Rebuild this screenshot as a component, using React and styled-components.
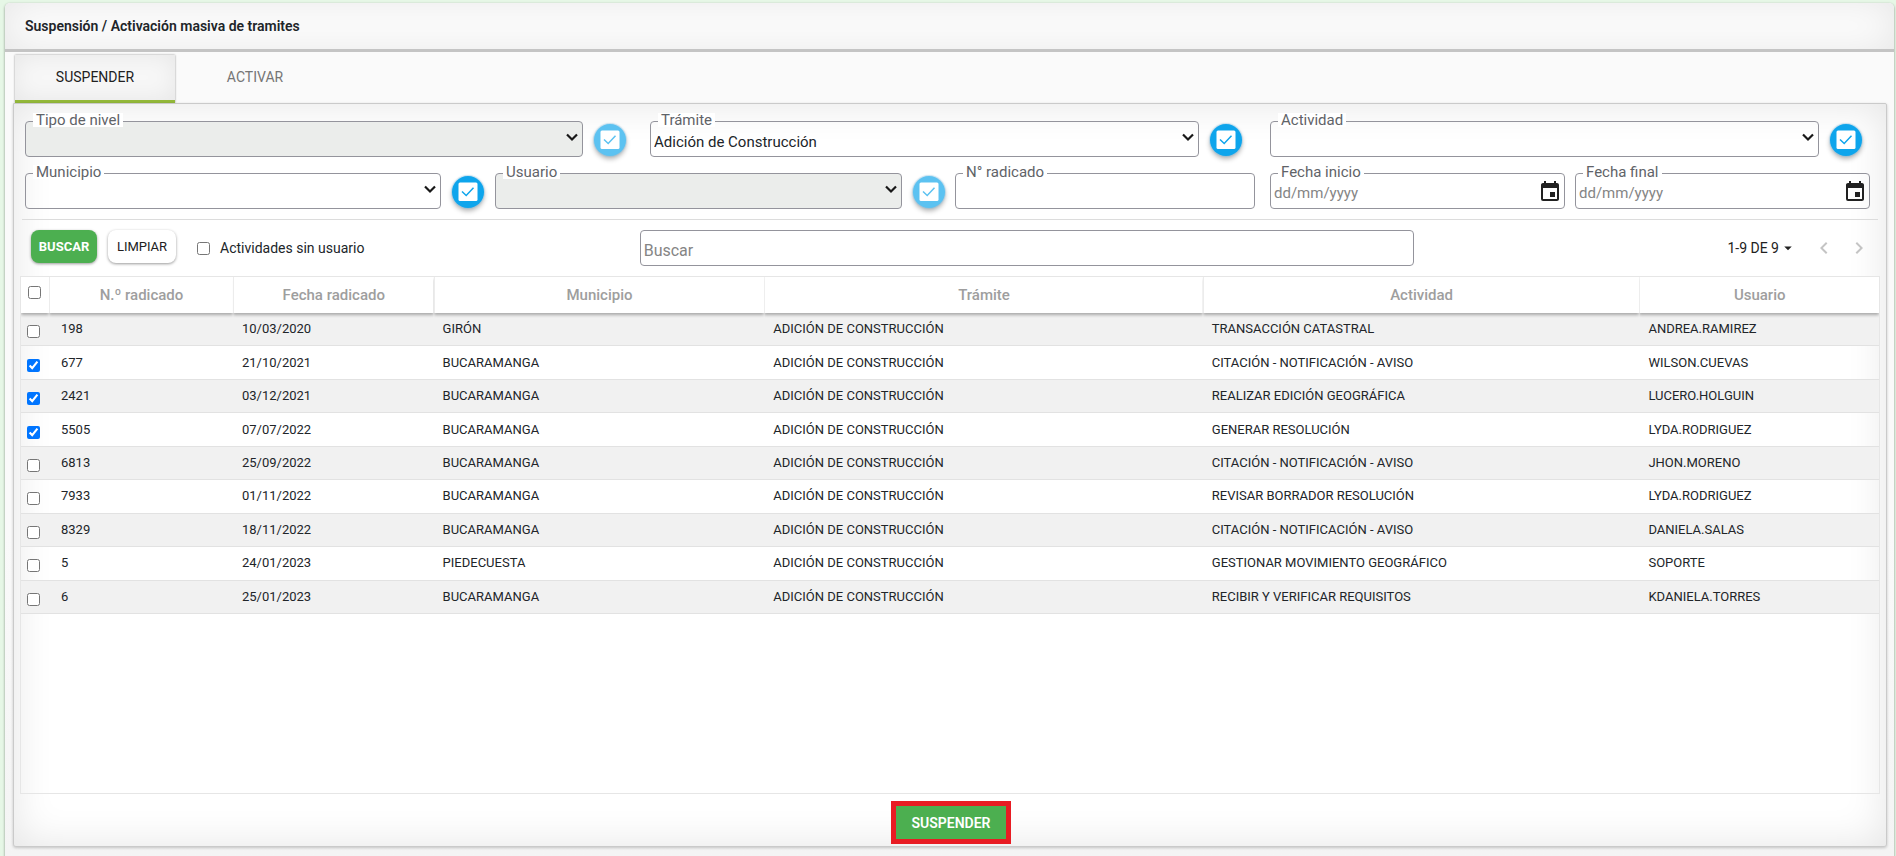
import React, { useState } from "react";
import styled, { createGlobalStyle, css } from "styled-components";
import { MdEvent, MdChevronLeft, MdChevronRight, MdArrowDropDown } from "react-icons/md";

const GlobalStyle = createGlobalStyle`
  *, *::before, *::after { box-sizing: border-box; }
  body {
    margin: 0;
    background: #e6f7e6;
    color: #212529;
    font-family: Roboto, "Liberation Sans", sans-serif;
    font-size: 14px;
  }
  button, input, select { font-family: inherit; }
`;

const Page = styled.div`
  display: flex;
  flex-direction: column;
  min-height: 100vh;
  padding: 3px 2px 0 5px;
`;

const Card = styled.main`
  display: flex;
  flex: 1;
  flex-direction: column;
  background: #fafafa;
  border-radius: 5px 5px 0 0;
  box-shadow: 0 1px 2px 1px rgba(0, 0, 0, 0.2);
  overflow: hidden;
`;

const CardHeader = styled.header`
  height: 49px;
  padding: 0 20px;
  background: #fff;
  border-bottom: 3px solid #c4c4c4;
  box-shadow: inset 0 0 40px rgba(0, 0, 0, 0.1);
`;

const Title = styled.h1`
  margin: 0;
  font-size: 14px;
  font-weight: 600;
  line-height: 46px;
`;

const CardBody = styled.div`
  display: flex;
  flex: 1;
  flex-direction: column;
  padding: 3px 7px 9px 8px;
  background: linear-gradient(#fafafa 60%, #f4f4f4);
`;

const Tabs = styled.div`
  display: flex;
  padding-left: 2px;
`;

const Tab = styled.button`
  width: 160px;
  height: 48px;
  padding: 0 0 2px;
  border: 0;
  border-bottom: 3px solid transparent;
  background: transparent;
  color: #757575;
  font-size: 14px;
  ${(p) =>
    p.$active &&
    css`
      border-bottom-color: #93b83a;
      background: #f7f7f7;
      color: #212121;
      box-shadow: inset 0 0 24px rgba(0, 0, 0, 0.07), 0 0 2px rgba(0, 0, 0, 0.4);
    `}
`;

const Panel = styled.section`
  display: flex;
  flex: 1;
  flex-direction: column;
  padding: 0 8px;
  border: 1px solid #cacaca;
  border-radius: 0 2px 3px 3px;
  background: #fff;
  box-shadow: inset 0 0 40px rgba(0, 0, 0, 0.11), 0 1px 3px rgba(0, 0, 0, 0.2);
`;

const Filters = styled.div`
  display: grid;
  gap: 16px;
  padding: 17px 8px 10px 3px;
  border-bottom: 1px solid #dcdcdc;
`;

const FilterRow = styled.div`
  display: grid;
  grid-template-columns: ${(p) => p.$columns};
`;

const FilterCell = styled.div`
  display: flex;
  gap: 11px;
  min-width: 0;
  padding-right: ${(p) => p.$end || 0}px;
`;

const Field = styled.div`
  position: relative;
  display: flex;
  flex: 1;
  min-width: 0;
`;

const FieldLabel = styled.label`
  position: absolute;
  top: -8px;
  left: 8px;
  padding: 0 3px;
  background: #fff;
  color: #5f6368;
  font-size: 15px;
  line-height: 14px;
`;

const controlStyle = css`
  width: 100%;
  height: 36px;
  margin: 0;
  border: 1px solid #94949c;
  border-radius: 4px;
  background: transparent;
  color: #212529;
  font-size: 16px;
  outline: 0;
  &::placeholder { color: #858585; opacity: 1; }
`;

const Select = styled.select`
  ${controlStyle}
  appearance: none;
  padding: 5px 28px 0 3px;
  font-size: 15px;
  opacity: 1;
  &:disabled { background: #ebedeb; }
`;

const TextInput = styled.input`
  ${controlStyle}
  padding: 4px 3px 0;
  font-size: ${(p) => (p.$compact ? 15 : 16)}px;
`;

const SelectArrow = styled.svg`
  position: absolute;
  top: 12px;
  right: 5px;
  width: 12px;
  height: 9px;
  pointer-events: none;
`;

const DateButton = styled.button`
  position: absolute;
  top: 7px;
  right: 3px;
  display: flex;
  padding: 0;
  border: 0;
  background: none;
  color: #212121;
  font-size: 24px;
`;

const RoundButton = styled.button`
  display: flex;
  flex: none;
  align-items: center;
  justify-content: center;
  align-self: flex-end;
  width: 32px;
  height: 32px;
  margin-bottom: 1px;
  padding: 0;
  border: 0;
  border-radius: 50%;
  background: #0ea5ec;
  color: #0ea5ec;
  box-shadow: 0 0 1px 1px rgba(120, 190, 230, 0.4), 0 3px 5px rgba(0, 0, 0, 0.3);
  &:disabled {
    background: #5cc2f1;
    color: #5cc2f1;
  }
`;

const Toolbar = styled.div`
  display: grid;
  grid-template-columns: 618fr 775fr 464fr;
  padding: 10px 0;
`;

const ToolbarActions = styled.div`
  display: flex;
  align-items: flex-start;
  padding-left: 9px;
`;

const Button = styled.button`
  width: ${(p) => p.$width}px;
  height: 33px;
  margin-right: ${(p) => p.$after || 0}px;
  padding: 0;
  border: 0;
  border-radius: 8px;
  background: #fff;
  color: #212121;
  font-size: 13px;
  box-shadow: 0 1px 3px rgba(0, 0, 0, 0.4);
  ${(p) =>
    p.$primary &&
    css`
      background: #4caf50;
      color: #fff;
      font-weight: 700;
    `}
`;

const CheckLabel = styled.label`
  display: flex;
  align-items: center;
  gap: 10px;
  height: 36px;
  font-size: 14px;
`;

const Checkbox = styled.input`
  display: block;
  width: 13px;
  height: 13px;
  margin: 0;
`;

const Pager = styled.div`
  display: flex;
  align-items: center;
  justify-content: flex-end;
  height: 36px;
  padding-right: 7px;
`;

const PagerButton = styled.button`
  display: flex;
  align-items: center;
  justify-content: center;
  height: 24px;
  padding: 0;
  border: 0;
  background: none;
  color: #212121;
  font-size: 14px;
  svg { width: 18px; height: 18px; }
`;

const PageArrow = styled(PagerButton)`
  width: 24px;
  margin-left: ${(p) => p.$before}px;
  color: #c4c4c4;
  svg { width: 24px; height: 24px; }
`;

const TableArea = styled.div`
  flex: 1;
  margin: 0 -2px;
  border: 1px solid #e6e6e6;
`;

const Table = styled.table`
  width: 100%;
  height: 337px;
  border-collapse: separate;
  border-spacing: 0;
  table-layout: fixed;
`;

const Head = styled.th`
  height: 36px;
  padding: 0 0 1px;
  border-left: ${(p) => (p.$first ? "0" : "1px solid #ececec")};
  background: #fff;
  color: #9e9e9e;
  font-size: 15px;
  font-weight: 500;
  text-align: center;
  box-shadow: 0 2px 3px rgba(0, 0, 0, 0.3);
  clip-path: inset(0 0 -6px 0);
`;

const Row = styled.tr`
  background: ${(p) => (p.$shaded ? "#f1f1f1" : "transparent")};
`;

const Cell = styled.td`
  padding: 0 9px 0 ${(p) => (p.$wide ? 12 : 9)}px;
  border-bottom: 1px solid #e2e2e2;
  font-size: 13px;
  line-height: 16px;
  white-space: nowrap;
`;

const CheckCell = styled(Cell)`
  padding: 5px 0 0 6px;
`;

const HeadCheck = styled.div`
  padding: 0 0 4px 7px;
`;

const Footer = styled.footer`
  display: flex;
  justify-content: center;
  padding: 7px 0 2px 2px;
`;

const SubmitButton = styled.button`
  width: 120px;
  height: 43px;
  padding: 0;
  border: 5px solid #e81c23;
  background: #4caf50;
  color: #fff;
  font-size: 14px;
  font-weight: 600;
`;

function SelectField({ id, label, value, disabled }) {
  return (
    <>
      <Field>
        <Select id={id} disabled={disabled} defaultValue={value || ""}>
          <option value={value || ""}>{value || ""}</option>
        </Select>
        <FieldLabel htmlFor={id}>{label}</FieldLabel>
        <SelectArrow viewBox="0 0 12 9" aria-hidden="true">
          <path d="M1 1.5 6 6.5 11 1.5" fill="none" stroke="#181818" strokeWidth="2.2" />
        </SelectArrow>
      </Field>
      <RoundButton type="button" disabled={disabled} aria-label={`Seleccionar ${label}`}>
        <svg width="20" height="20" viewBox="0 0 20 20" aria-hidden="true">
          <rect x="0.5" y="0.5" width="19" height="18.5" rx="1.5" fill="#fff" />
          <path d="M4 9.5 8.2 13.5 15.5 5.8" fill="none" stroke="currentColor" strokeWidth="1.5" />
        </svg>
      </RoundButton>
    </>
  );
}

function InputField({ id, label, placeholder, date }) {
  return (
    <Field>
      <TextInput id={id} type="text" placeholder={placeholder} $compact />
      <FieldLabel htmlFor={id}>{label}</FieldLabel>
      {date && (
        <DateButton type="button" aria-label={`Abrir calendario de ${label}`}>
          <MdEvent />
        </DateButton>
      )}
    </Field>
  );
}

const COLUMNS = ["N.º radicado", "Fecha radicado", "Municipio", "Trámite", "Actividad", "Usuario"];
const COLUMN_WIDTHS = ["9.9%", "10.8%", "17.8%", "23.6%", "23.5%", "auto"];
const TRAMITE = "ADICIÓN DE CONSTRUCCIÓN";

const ROWS = [
  ["198", "10/03/2020", "GIRÓN", TRAMITE, "TRANSACCIÓN CATASTRAL", "ANDREA.RAMIREZ"],
  ["677", "21/10/2021", "BUCARAMANGA", TRAMITE, "CITACIÓN - NOTIFICACIÓN - AVISO", "WILSON.CUEVAS"],
  ["2421", "03/12/2021", "BUCARAMANGA", TRAMITE, "REALIZAR EDICIÓN GEOGRÁFICA", "LUCERO.HOLGUIN"],
  ["5505", "07/07/2022", "BUCARAMANGA", TRAMITE, "GENERAR RESOLUCIÓN", "LYDA.RODRIGUEZ"],
  ["6813", "25/09/2022", "BUCARAMANGA", TRAMITE, "CITACIÓN - NOTIFICACIÓN - AVISO", "JHON.MORENO"],
  ["7933", "01/11/2022", "BUCARAMANGA", TRAMITE, "REVISAR BORRADOR RESOLUCIÓN", "LYDA.RODRIGUEZ"],
  ["8329", "18/11/2022", "BUCARAMANGA", TRAMITE, "CITACIÓN - NOTIFICACIÓN - AVISO", "DANIELA.SALAS"],
  ["5", "24/01/2023", "PIEDECUESTA", TRAMITE, "GESTIONAR MOVIMIENTO GEOGRÁFICO", "SOPORTE"],
  ["6", "25/01/2023", "BUCARAMANGA", TRAMITE, "RECIBIR Y VERIFICAR REQUISITOS", "KDANIELA.TORRES"],
];

export default function App() {
  const [selected, setSelected] = useState(["677", "2421", "5505"]);
  const [tab, setTab] = useState("SUSPENDER");
  const toggle = (id) =>
    setSelected((ids) => (ids.includes(id) ? ids.filter((x) => x !== id) : [...ids, id]));
  const allSelected = selected.length === ROWS.length;

  return (
    <>
      <GlobalStyle />
      <Page>
        <Card>
          <CardHeader>
            <Title>Suspensión / Activación masiva de tramites</Title>
          </CardHeader>
          <CardBody>
            <Tabs role="tablist">
              {["SUSPENDER", "ACTIVAR"].map((name) => (
                <Tab
                  key={name}
                  type="button"
                  role="tab"
                  aria-selected={tab === name}
                  $active={tab === name}
                  onClick={() => setTab(name)}
                >
                  {name}
                </Tab>
              ))}
            </Tabs>
            <Panel>
              <Filters>
                <FilterRow $columns="625fr 620fr 600fr">
                  <FilterCell $end={24}>
                    <SelectField id="nivel" label="Tipo de nivel" disabled />
                  </FilterCell>
                  <FilterCell $end={28}>
                    <SelectField id="tramite" label="Trámite" value="Adición de Construcción" />
                  </FilterCell>
                  <FilterCell $end={8}>
                    <SelectField id="actividad" label="Actividad" />
                  </FilterCell>
                </FilterRow>
                <FilterRow $columns="470fr 460fr 315fr 305fr 295fr">
                  <FilterCell $end={11}>
                    <SelectField id="municipio" label="Municipio" />
                  </FilterCell>
                  <FilterCell $end={10}>
                    <SelectField id="usuario" label="Usuario" disabled />
                  </FilterCell>
                  <FilterCell $end={15}>
                    <InputField id="radicado" label="N° radicado" />
                  </FilterCell>
                  <FilterCell $end={10}>
                    <InputField id="inicio" label="Fecha inicio" placeholder="dd/mm/yyyy" date />
                  </FilterCell>
                  <FilterCell>
                    <InputField id="final" label="Fecha final" placeholder="dd/mm/yyyy" date />
                  </FilterCell>
                </FilterRow>
              </Filters>
              <Toolbar>
                <ToolbarActions>
                  <Button type="button" $primary $width={66} $after={11}>BUSCAR</Button>
                  <Button type="button" $width={68} $after={21}>LIMPIAR</Button>
                  <CheckLabel>
                    <Checkbox type="checkbox" />
                    Actividades sin usuario
                  </CheckLabel>
                </ToolbarActions>
                <TextInput type="text" placeholder="Buscar" aria-label="Buscar" />
                <Pager>
                  <PagerButton type="button">
                    1-9 DE 9
                    <MdArrowDropDown />
                  </PagerButton>
                  <PageArrow type="button" aria-label="Página anterior" $before={15}>
                    <MdChevronLeft />
                  </PageArrow>
                  <PageArrow type="button" aria-label="Página siguiente" $before={11}>
                    <MdChevronRight />
                  </PageArrow>
                </Pager>
              </Toolbar>
              <TableArea>
                <Table>
                  <colgroup>
                    <col style={{ width: 28 }} />
                    {COLUMN_WIDTHS.map((width, i) => (
                      <col key={COLUMNS[i]} style={{ width }} />
                    ))}
                  </colgroup>
                  <thead>
                    <tr>
                      <Head $first>
                        <HeadCheck>
                          <Checkbox
                            type="checkbox"
                            aria-label="Seleccionar todos"
                            checked={allSelected}
                            onChange={() => setSelected(allSelected ? [] : ROWS.map((r) => r[0]))}
                          />
                        </HeadCheck>
                      </Head>
                      {COLUMNS.map((name) => (
                        <Head key={name} scope="col">{name}</Head>
                      ))}
                    </tr>
                  </thead>
                  <tbody>
                    {ROWS.map((row, i) => (
                      <Row key={row[0]} $shaded={i % 2 === 0}>
                        <CheckCell>
                          <Checkbox
                            type="checkbox"
                            aria-label={`Seleccionar ${row[0]}`}
                            checked={selected.includes(row[0])}
                            onChange={() => toggle(row[0])}
                          />
                        </CheckCell>
                        {row.map((text, c) => (
                          <Cell key={COLUMNS[c]} $wide={c === 0}>{text}</Cell>
                        ))}
                      </Row>
                    ))}
                  </tbody>
                </Table>
              </TableArea>
              <Footer>
                <SubmitButton type="button">SUSPENDER</SubmitButton>
              </Footer>
            </Panel>
          </CardBody>
        </Card>
      </Page>
    </>
  );
}
